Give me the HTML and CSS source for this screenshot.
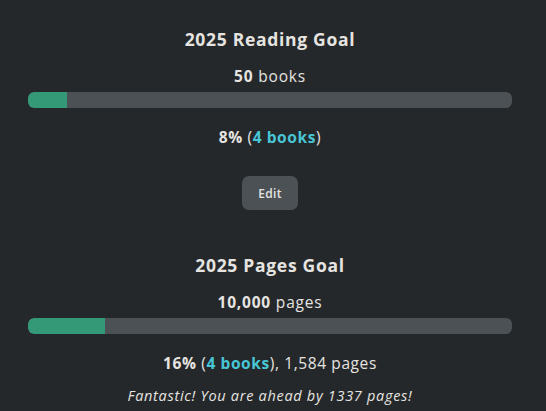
FILE: index.html
```html
<!DOCTYPE html>
<html>
<head>
<meta charset="utf-8">
<link rel="stylesheet" href="styles.css">
</head>
<body>
<main class="page">
  <section class="goal">
    <h2 class="goal-title">2025 Reading Goal</h2>
    <p class="goal-target"><strong>50</strong> books</p>
    <div class="bar"><div class="bar-fill" style="width: 8%"></div></div>
    <p class="goal-progress"><strong>8%</strong> (<strong class="accent">4 books</strong>)</p>
    <button class="edit-btn">Edit</button>
  </section>
  <section class="goal goal-pages">
    <h2 class="goal-title">2025 Pages Goal</h2>
    <p class="goal-target"><strong>10,000</strong> pages</p>
    <div class="bar"><div class="bar-fill" style="width: 16%"></div></div>
    <p class="goal-progress"><strong>16%</strong> (<strong class="accent">4 books</strong>), 1,584 pages</p>
    <p class="goal-note">Fantastic! You are ahead by 1337 pages!</p>
  </section>
</main>
</body>
</html>
```

FILE: styles.css
```css
html, body {
  margin: 0;
  padding: 0;
  background: #25282a;
}
body {
  font-family: "Open Sans", "DejaVu Sans", sans-serif;
  color: #e6e4e1;
}
.page {
  padding: 27px 34px 0 28px;
}
.goal {
  display: flex;
  flex-direction: column;
  align-items: center;
}
.goal-title {
  margin: 0;
  font-size: 17.5px;
  line-height: 24px;
  font-weight: 700;
  letter-spacing: 0.7px;
}
.goal-target {
  margin: 14px 0 0;
  font-size: 15.5px;
  line-height: 22px;
  letter-spacing: 0.8px;
}
.goal-target strong, .goal-progress strong {
  font-weight: 700;
}
.bar {
  align-self: stretch;
  margin-top: 5px;
  height: 16px;
  border-radius: 6px;
  background: #4c5155;
  overflow: hidden;
}
.bar-fill {
  height: 100%;
  background: #339977;
  border-radius: 6px 0 0 6px;
}
.goal-progress {
  margin: 18px 0 0;
  font-size: 15.5px;
  line-height: 22px;
  letter-spacing: 0.6px;
}
.accent {
  color: #48c6d6;
}
.edit-btn {
  margin-top: 28px;
  width: 56px;
  height: 34px;
  border: none;
  border-radius: 7px;
  background: #4c5155;
  color: #e6e4e1;
  font-family: inherit;
  font-size: 12px;
  font-weight: 600;
  letter-spacing: 0.3px;
}
.goal-pages {
  margin-top: 43px;
}
.goal-note {
  margin: 12px 0 0;
  font-size: 14.5px;
  line-height: 20px;
  font-style: italic;
  letter-spacing: 0.7px;
}
```
